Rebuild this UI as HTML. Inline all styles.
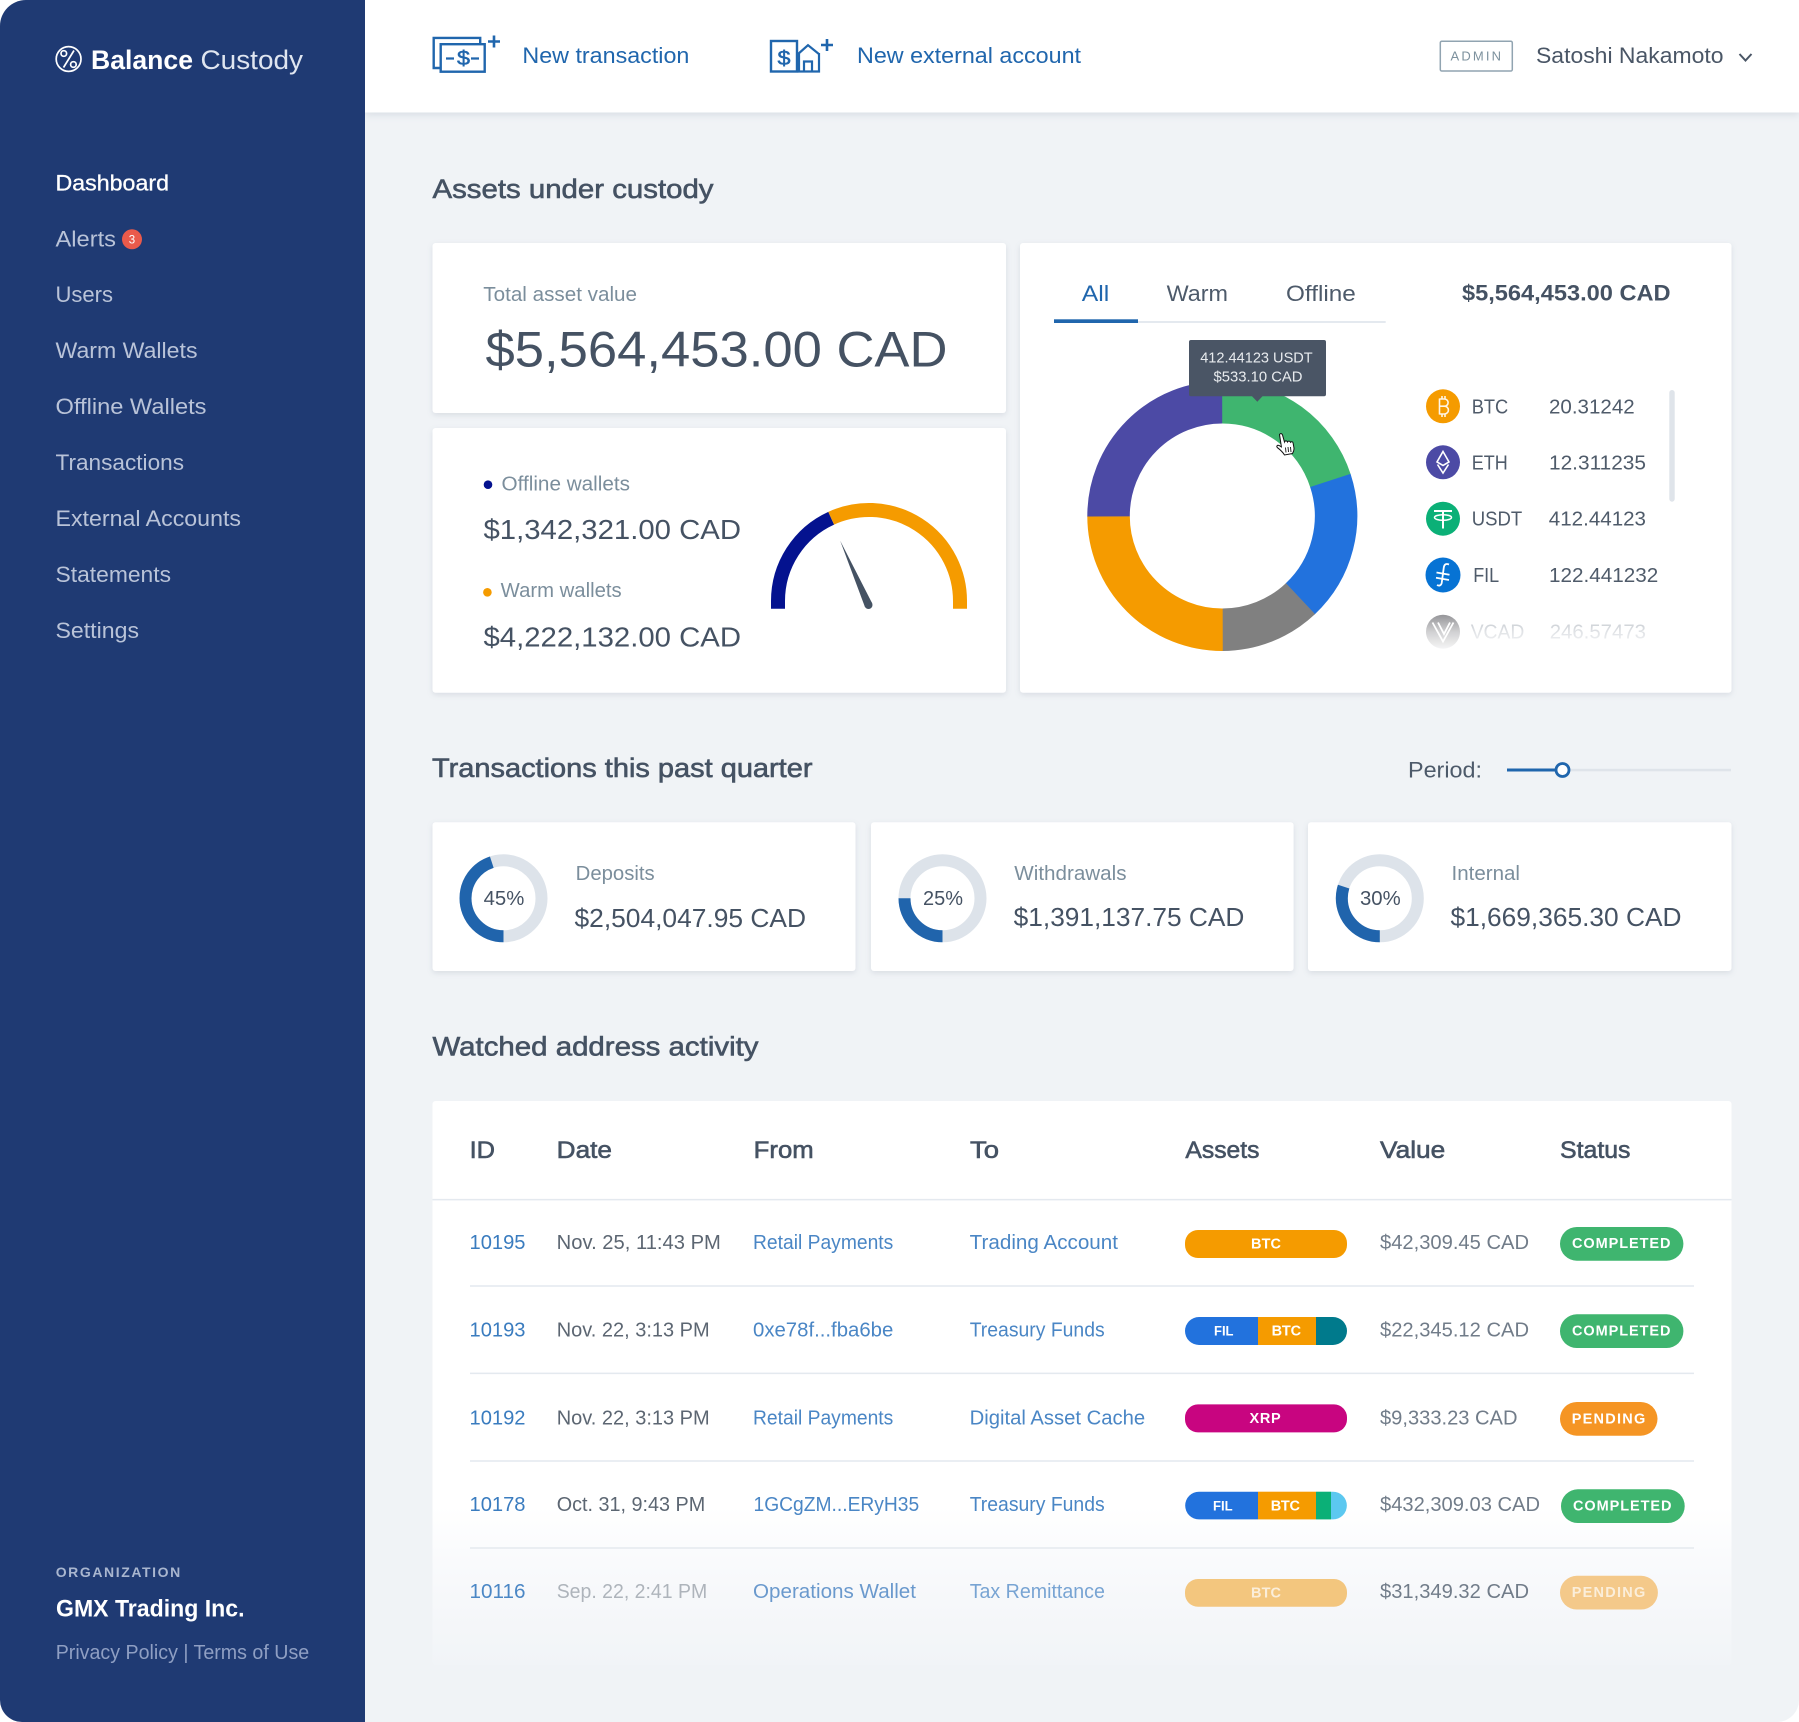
<!DOCTYPE html>
<html lang="en">
<head>
<meta charset="utf-8">
<title>Balance Custody Dashboard</title>
<style>
html,body{margin:0;padding:0;background:#fff;width:1799px;height:1722px;overflow:hidden}
svg{display:block;border-radius:26px 0 22px 22px;overflow:hidden}
text{font-family:"Liberation Sans",Arial,sans-serif;white-space:pre}
.n{font-size:22px;fill:#b9c3d8}
.h{font-size:26.5px;fill:#455263;stroke:#455263;stroke-width:.6}
.th{font-size:24px;fill:#455263;stroke:#455263;stroke-width:.6}
.lb{font-size:20px;fill:#7b8e9c}
.am{font-size:26px;fill:#455263}
.tab{font-size:22px;fill:#4d5a6a}
.c{font-size:20.5px;fill:#4f5b6a}
.id{font-size:20px;fill:#3a7cbf}
.d{font-size:20px;fill:#5c6672}
.l{font-size:20px;fill:#4a86c5}
.v{font-size:20px;fill:#717c89}
.p{font-size:14.5px;font-weight:bold;fill:#fff}
.s{font-size:14.5px;font-weight:bold;fill:#fff}
.card{fill:#fff;filter:drop-shadow(0 2px 3px rgba(60,80,110,.13))}
.ln{stroke:#e4e9ef;stroke-width:1.5}
</style>
</head>
<body>
<svg xmlns="http://www.w3.org/2000/svg" width="1799" height="1722" viewBox="0 0 1799 1722">
<defs>
<linearGradient id="tb" gradientUnits="userSpaceOnUse" x1="0" y1="1101" x2="0" y2="1665">
<stop offset="0" stop-color="#fff"/><stop offset=".72" stop-color="#fff"/><stop offset=".82" stop-color="#f9fafc"/><stop offset="1" stop-color="#f1f4f7"/>
</linearGradient>
<linearGradient id="fd" gradientUnits="userSpaceOnUse" x1="0" y1="612" x2="0" y2="652">
<stop offset="0" stop-color="#fff" stop-opacity="0"/><stop offset=".5" stop-color="#fff" stop-opacity=".6"/><stop offset="1" stop-color="#fff" stop-opacity=".98"/>
</linearGradient>
</defs>
<rect width="1799" height="1722" fill="#f0f3f6"/>

<!-- header -->
<rect x="365" y="0" width="1434" height="112.5" fill="#fff" style="filter:drop-shadow(0 2px 4px rgba(60,80,110,.14))"/>
<g fill="none" stroke="#2066ad" stroke-width="2.4">
<path d="M440 68H433.7V37.900H480.200V43.500"/>
<rect x="440.700" y="44.200" width="44" height="27.500"/>
<path d="M446 58.500h8M471 58.500h8" stroke-width="2.200"/>
<path d="M494 35.500v12M488 41.500h12" stroke-width="2.600"/>
<rect x="771" y="41" width="26" height="30.500"/>
<path d="M797.500 54.500L808 45.200L819.500 54.500M799 53V71.500H819V53M804 71.500V61.500H812V71.500" stroke-width="2.200"/>
<path d="M827 39v12M821 45h12" stroke-width="2.600"/>
</g>
<text x="457" y="65" font-size="20" fill="#2066ad" stroke="#2066ad" stroke-width=".5" textLength="13" lengthAdjust="spacingAndGlyphs">$</text>
<text x="777.500" y="65" font-size="20" fill="#2066ad" stroke="#2066ad" stroke-width=".5" textLength="13" lengthAdjust="spacingAndGlyphs">$</text>
<text x="522.400" y="63" font-size="22px" fill="#2066ad" textLength="167" lengthAdjust="spacingAndGlyphs">New transaction</text>
<text x="857" y="63" font-size="22px" fill="#2066ad" textLength="224" lengthAdjust="spacingAndGlyphs">New external account</text>
<rect x="1440.300" y="41.200" width="72" height="29.800" rx="1.500" fill="#fff" stroke="#91a4b1" stroke-width="1.500"/>
<text x="1450.500" y="60.500" font-size="13px" fill="#7d919e" textLength="50.500">ADMIN</text>
<text x="1536" y="63" font-size="22px" fill="#4a5666" textLength="187.500" lengthAdjust="spacingAndGlyphs">Satoshi Nakamoto</text>
<path d="M1739.500 54l6 6.500l6-6.500" fill="none" stroke="#4a5666" stroke-width="2"/>

<!-- sidebar -->
<rect x="0" y="0" width="365" height="1722" fill="#1f3a73"/>
<g fill="none" stroke="#fff" stroke-width="1.700">
<circle cx="68.600" cy="59" r="12.400"/>
<path d="M74 50.500L63.500 67.500" />
<circle cx="63.800" cy="53.500" r="2.800"/>
<circle cx="73.400" cy="64.500" r="2.800"/>
</g>
<text x="91" y="69" font-size="27px" font-weight="bold" fill="#fff" textLength="102" lengthAdjust="spacingAndGlyphs">Balance</text>
<text x="200.500" y="69" font-size="27px" fill="#dfe5f0" textLength="102.500" lengthAdjust="spacingAndGlyphs">Custody</text>

<text x="55.500" y="190.300" class="n" style="fill:#fff" stroke="#fff" stroke-width=".3" textLength="113.500" lengthAdjust="spacingAndGlyphs">Dashboard</text>
<text x="55.500" y="246.300" class="n" textLength="60.500" lengthAdjust="spacingAndGlyphs">Alerts</text>
<circle cx="132" cy="239.300" r="10" fill="#ea5a4b"/>
<text x="128.700" y="243.500" font-size="11.500px" fill="#fff">3</text>
<text x="55.500" y="302.200" class="n" textLength="57.500" lengthAdjust="spacingAndGlyphs">Users</text>
<text x="55.500" y="358.100" class="n" textLength="142" lengthAdjust="spacingAndGlyphs">Warm Wallets</text>
<text x="55.500" y="414" class="n" textLength="151" lengthAdjust="spacingAndGlyphs">Offline Wallets</text>
<text x="55.500" y="470" class="n" textLength="128.500" lengthAdjust="spacingAndGlyphs">Transactions</text>
<text x="55.500" y="525.900" class="n" textLength="185.500" lengthAdjust="spacingAndGlyphs">External Accounts</text>
<text x="55.500" y="581.900" class="n" textLength="115.500" lengthAdjust="spacingAndGlyphs">Statements</text>
<text x="55.500" y="637.800" class="n" textLength="83.500" lengthAdjust="spacingAndGlyphs">Settings</text>

<text x="55.700" y="1576.800" font-size="14px" font-weight="bold" fill="#a9b6cf" textLength="124.500">ORGANIZATION</text>
<text x="56" y="1616.700" font-size="24px" font-weight="bold" fill="#fff" textLength="188.500" lengthAdjust="spacingAndGlyphs">GMX Trading Inc.</text>
<text x="55.700" y="1659" font-size="20.500px" fill="#8f9fc3" textLength="253.500" lengthAdjust="spacingAndGlyphs">Privacy Policy | Terms of Use</text>

<!-- Assets under custody -->
<text x="432.500" y="198" class="h" textLength="281" lengthAdjust="spacingAndGlyphs">Assets under custody</text>

<rect class="card" x="432.500" y="243" width="573.500" height="170" rx="3"/>
<text x="483.300" y="301" class="lb" textLength="153.700" lengthAdjust="spacingAndGlyphs">Total asset value</text>
<text x="485.500" y="366.700" font-size="50px" fill="#455263" textLength="462" lengthAdjust="spacingAndGlyphs">$5,564,453.00 CAD</text>

<rect class="card" x="432.500" y="428" width="573.500" height="264.700" rx="3"/>
<circle cx="488" cy="484.700" r="4.300" fill="#04128f"/>
<text x="501.500" y="490.700" class="lb" textLength="128.500" lengthAdjust="spacingAndGlyphs">Offline wallets</text>
<text x="483.500" y="539" font-size="28px" fill="#455263" textLength="257.500" lengthAdjust="spacingAndGlyphs">$1,342,321.00 CAD</text>
<circle cx="487.400" cy="592.300" r="4.300" fill="#f59b00"/>
<text x="500.700" y="597" class="lb" textLength="121" lengthAdjust="spacingAndGlyphs">Warm wallets</text>
<text x="483.500" y="646.400" font-size="28px" fill="#455263" textLength="257.500" lengthAdjust="spacingAndGlyphs">$4,222,132.00 CAD</text>
<g fill="none" stroke-width="14">
<path d="M778 608.700V601A91 91 0 0 1 831.200 518.200" stroke="#04128f"/>
<path d="M831.200 518.200A91 91 0 0 1 960 601V608.700" stroke="#f59b00"/>
</g>
<path d="M840.200 540.700L872.200 603.400L864.800 606.600Z" fill="#455263"/>
<circle cx="868.500" cy="605" r="4" fill="#455263"/>

<!-- donut card -->
<rect class="card" x="1020" y="243" width="711.500" height="449.700" rx="3"/>
<text x="1081.800" y="301" class="tab" style="fill:#2066ad" textLength="27.500" lengthAdjust="spacingAndGlyphs">All</text>
<text x="1166.600" y="301" class="tab" textLength="61.400" lengthAdjust="spacingAndGlyphs">Warm</text>
<text x="1286" y="301" class="tab" textLength="69.800" lengthAdjust="spacingAndGlyphs">Offline</text>
<rect x="1054" y="321" width="331.700" height="2" fill="#e4e9ef"/>
<rect x="1054" y="319.300" width="84" height="3.700" fill="#2066ad"/>
<text x="1462" y="300.700" font-size="22px" font-weight="bold" fill="#455263" textLength="208.600" lengthAdjust="spacingAndGlyphs">$5,564,453.00 CAD</text>

<g fill="none" stroke-width="42.500">
<circle cx="1222.300" cy="516" r="113.750" pathLength="360" stroke="#3fb56f" stroke-dasharray="72 288" transform="rotate(-90 1222.300 516)"/>
<circle cx="1222.300" cy="516" r="113.750" pathLength="360" stroke="#2272dd" stroke-dasharray="64.800 295.200" transform="rotate(-18 1222.300 516)"/>
<circle cx="1222.300" cy="516" r="113.750" pathLength="360" stroke="#808080" stroke-dasharray="43.200 316.800" transform="rotate(46.800 1222.300 516)"/>
<circle cx="1222.300" cy="516" r="113.750" pathLength="360" stroke="#f59b00" stroke-dasharray="90 270" transform="rotate(90 1222.300 516)"/>
<circle cx="1222.300" cy="516" r="113.750" pathLength="360" stroke="#4c4aa5" stroke-dasharray="90 270" transform="rotate(180 1222.300 516)"/>
</g>
<path d="M1189 342a2 2 0 0 1 2-2H1324a2 2 0 0 1 2 2V394.300a2 2 0 0 1-2 2H1262.500L1257.300 401.700L1252 396.300H1191a2 2 0 0 1-2-2Z" fill="#4a5565"/>
<text x="1200.200" y="362.700" font-size="15px" fill="#e8ebee" textLength="112.500" lengthAdjust="spacingAndGlyphs">412.44123 USDT</text>
<text x="1213.500" y="381.700" font-size="15px" fill="#e8ebee" textLength="89" lengthAdjust="spacingAndGlyphs">$533.10 CAD</text>
<g transform="translate(-1 0)">
<path d="M1280.500 434.500c1-1.500 2.600-1 3 .5l2 7c.5-1.500 2.500-1.500 3 0c.6-1.200 2.500-1.200 3 .3c.8-1 2.400-.7 2.600.8l.9 5c.2 2-.5 3.500-1.500 5.400l-8 1.500c-1.500-2.500-4-5-7-7.300c-1.500-1.400-.2-3 1.500-2.200l2.400 1.400z" fill="#fff" stroke="#111" stroke-width="1"/>
<path d="M1286.500 447.500l.5 5M1289 447l.5 5M1291.500 447l.5 5" stroke="#111" stroke-width=".9"/>
</g>

<!-- coin list -->
<circle cx="1443" cy="406.300" r="17" fill="#f59b00"/>
<path d="M1439.500 398.500V414.500M1439.500 399H1444.500a3.600 3.600 0 0 1 0 7.200H1439.500M1444.500 406.200a3.900 3.900 0 0 1 0 7.800H1439.500M1442 396v3M1445 396v3M1442 414v3M1445 414v3" fill="none" stroke="#fff" stroke-width="1.600" opacity=".9"/>
<text x="1471.700" y="413.300" class="c" textLength="36.500" lengthAdjust="spacingAndGlyphs">BTC</text>
<text x="1549" y="413.300" class="c" textLength="85.700" lengthAdjust="spacingAndGlyphs">20.31242</text>
<circle cx="1443" cy="462.300" r="17" fill="#4c4aa5"/>
<path d="M1443 451.500L1449 462L1443 465.500L1437 462ZM1437.500 464.500L1443 473L1448.500 464.500" fill="none" stroke="#fff" stroke-width="1.600"/>
<text x="1471.700" y="469.700" class="c" textLength="36" lengthAdjust="spacingAndGlyphs">ETH</text>
<text x="1549" y="469.700" class="c" textLength="97" lengthAdjust="spacingAndGlyphs">12.311235</text>
<circle cx="1443" cy="518.700" r="17" fill="#0bb077"/>
<path d="M1434 511H1452M1443 511V528.500" fill="none" stroke="#fff" stroke-width="2"/>
<ellipse cx="1443" cy="517.500" rx="8.500" ry="2.800" fill="none" stroke="#fff" stroke-width="1.500"/>
<text x="1471.700" y="525.700" class="c" textLength="50.500" lengthAdjust="spacingAndGlyphs">USDT</text>
<text x="1548.800" y="525.700" class="c" textLength="97.200" lengthAdjust="spacingAndGlyphs">412.44123</text>
<circle cx="1443" cy="575" r="17.500" fill="#0773d4"/>
<path d="M1449 564.500c-3.500-1.500-4.800 .5-5.200 3L1441.700 583c-.5 2.500-2.500 3.200-4.700 2M1436.500 572.500L1449.500 574.800M1436 577.800L1449 580" fill="none" stroke="#fff" stroke-width="1.800"/>
<text x="1473.200" y="582" class="c" textLength="26" lengthAdjust="spacingAndGlyphs">FIL</text>
<text x="1549" y="582" class="c" textLength="109.300" lengthAdjust="spacingAndGlyphs">122.441232</text>
<circle cx="1443" cy="631.700" r="17" fill="#8c8c90"/>
<path d="M1432.500 622.500L1443 641.500L1453.500 622.500M1438 622.500L1444 634L1450 622.500" fill="none" stroke="#fff" stroke-width="1.800"/>
<text x="1470.700" y="638.300" class="c" style="fill:#b4bac2" textLength="53.600" lengthAdjust="spacingAndGlyphs">VCAD</text>
<text x="1549.700" y="638.300" class="c" style="fill:#b4bac2" textLength="96.300" lengthAdjust="spacingAndGlyphs">246.57473</text>
<rect x="1425" y="612" width="240" height="46" fill="url(#fd)"/>
<rect x="1669.300" y="390" width="5.400" height="111.700" rx="2.700" fill="#dfe4ea"/>

<!-- Transactions -->
<text x="432" y="777" class="h" textLength="380.500" lengthAdjust="spacingAndGlyphs">Transactions this past quarter</text>
<text x="1408" y="777.500" class="tab" textLength="74" lengthAdjust="spacingAndGlyphs">Period:</text>
<rect x="1507" y="768.800" width="224" height="2.500" fill="#dfe4ea"/>
<rect x="1507" y="768.500" width="50" height="3" fill="#2066ad"/>
<circle cx="1562.500" cy="770" r="6.500" fill="#fff" stroke="#2066ad" stroke-width="2.800"/>

<rect class="card" x="432.500" y="822.300" width="423" height="148.700" rx="3"/>
<rect class="card" x="871" y="822.300" width="422.600" height="148.700" rx="3"/>
<rect class="card" x="1308" y="822.300" width="423.500" height="148.700" rx="3"/>
<g fill="none" stroke-width="12">
<circle cx="503.500" cy="898.300" r="38" stroke="#dde3ea"/>
<circle cx="503.500" cy="898.300" r="38" stroke="#2064ac" pathLength="100" stroke-dasharray="45 55" transform="rotate(90 503.500 898.300)"/>
<circle cx="942.500" cy="898.300" r="38" stroke="#dde3ea"/>
<circle cx="942.500" cy="898.300" r="38" stroke="#2064ac" pathLength="100" stroke-dasharray="25 75" transform="rotate(90 942.500 898.300)"/>
<circle cx="1379.800" cy="898.300" r="38" stroke="#dde3ea"/>
<circle cx="1379.800" cy="898.300" r="38" stroke="#2064ac" pathLength="100" stroke-dasharray="30 70" transform="rotate(90 1379.800 898.300)"/>
</g>
<text x="483.600" y="905" font-size="20px" fill="#455263" textLength="40.700" lengthAdjust="spacingAndGlyphs">45%</text>
<text x="923" y="905" font-size="20px" fill="#455263" textLength="40" lengthAdjust="spacingAndGlyphs">25%</text>
<text x="1360" y="905" font-size="20px" fill="#455263" textLength="40.700" lengthAdjust="spacingAndGlyphs">30%</text>
<text x="575.700" y="880" class="lb" textLength="79" lengthAdjust="spacingAndGlyphs">Deposits</text>
<text x="1014.300" y="880" class="lb" textLength="112.200" lengthAdjust="spacingAndGlyphs">Withdrawals</text>
<text x="1451.500" y="880" class="lb" textLength="68.500" lengthAdjust="spacingAndGlyphs">Internal</text>
<text x="574.500" y="927" class="am" textLength="231.500" lengthAdjust="spacingAndGlyphs">$2,504,047.95 CAD</text>
<text x="1013.700" y="926" class="am" textLength="230.700" lengthAdjust="spacingAndGlyphs">$1,391,137.75 CAD</text>
<text x="1450.500" y="926" class="am" textLength="231" lengthAdjust="spacingAndGlyphs">$1,669,365.30 CAD</text>

<!-- Watched -->
<text x="432.500" y="1055.500" class="h" textLength="326" lengthAdjust="spacingAndGlyphs">Watched address activity</text>
<rect x="432.500" y="1101" width="1299" height="564" rx="3" fill="url(#tb)"/>
<text x="469.600" y="1158.200" class="th" textLength="25.400" lengthAdjust="spacingAndGlyphs">ID</text>
<text x="556.700" y="1158.200" class="th" textLength="55.300" lengthAdjust="spacingAndGlyphs">Date</text>
<text x="753.700" y="1158.200" class="th" textLength="60" lengthAdjust="spacingAndGlyphs">From</text>
<text x="970" y="1158.200" class="th" textLength="29" lengthAdjust="spacingAndGlyphs">To</text>
<text x="1185.400" y="1158.200" class="th" textLength="74.100" lengthAdjust="spacingAndGlyphs">Assets</text>
<text x="1380" y="1158.200" class="th" textLength="65.300" lengthAdjust="spacingAndGlyphs">Value</text>
<text x="1560" y="1158.200" class="th" textLength="70.500" lengthAdjust="spacingAndGlyphs">Status</text>
<path class="ln" d="M432.500 1199.600H1731.500M470 1286H1694M470 1373.400H1694M470 1461H1694M470 1548H1694" fill="none"/>

<!-- row 1 -->
<text x="469.500" y="1249.200" class="id" textLength="56" lengthAdjust="spacingAndGlyphs">10195</text>
<text x="556.700" y="1249.200" class="d" textLength="164.200" lengthAdjust="spacingAndGlyphs">Nov. 25, 11:43 PM</text>
<text x="753" y="1249.200" class="l" textLength="140.300" lengthAdjust="spacingAndGlyphs">Retail Payments</text>
<text x="969.700" y="1249.200" class="l" textLength="148.300" lengthAdjust="spacingAndGlyphs">Trading Account</text>
<rect x="1185" y="1230" width="162" height="28" rx="13" fill="#f59b00"/>
<text x="1251" y="1248.400" class="p" textLength="30">BTC</text>
<text x="1380" y="1249.200" class="v" textLength="149" lengthAdjust="spacingAndGlyphs">$42,309.45 CAD</text>
<rect x="1560" y="1227" width="123.400" height="33.700" rx="16.800" fill="#3fb56f"/>
<text x="1572" y="1248.200" class="s" textLength="98.500">COMPLETED</text>

<!-- row 2 -->
<text x="469.500" y="1336.500" class="id" textLength="56" lengthAdjust="spacingAndGlyphs">10193</text>
<text x="556.700" y="1336.500" class="d" textLength="153" lengthAdjust="spacingAndGlyphs">Nov. 22, 3:13 PM</text>
<text x="753" y="1336.500" class="l" textLength="140.300" lengthAdjust="spacingAndGlyphs">0xe78f...fba6be</text>
<text x="969.700" y="1336.500" class="l" textLength="135" lengthAdjust="spacingAndGlyphs">Treasury Funds</text>
<path d="M1199 1317H1258V1345H1199a14 14 0 0 1 0-28Z" fill="#2272dd"/>
<rect x="1258" y="1317" width="58" height="28" fill="#f59b00"/>
<path d="M1316 1317H1333a14 14 0 0 1 0 28H1316Z" fill="#007a8c"/>
<text x="1214" y="1335.400" font-size="14px" font-weight="bold" fill="#fff" textLength="19.500" lengthAdjust="spacingAndGlyphs">FIL</text>
<text x="1271.600" y="1335.400" class="p" textLength="29.500">BTC</text>
<text x="1380" y="1336.500" class="v" textLength="149" lengthAdjust="spacingAndGlyphs">$22,345.12 CAD</text>
<rect x="1560" y="1314.300" width="123.400" height="33.700" rx="16.800" fill="#3fb56f"/>
<text x="1572" y="1335.500" class="s" textLength="98.500">COMPLETED</text>

<!-- row 3 -->
<text x="469.500" y="1424.400" class="id" textLength="56" lengthAdjust="spacingAndGlyphs">10192</text>
<text x="556.700" y="1424.400" class="d" textLength="153" lengthAdjust="spacingAndGlyphs">Nov. 22, 3:13 PM</text>
<text x="753" y="1424.400" class="l" textLength="140.300" lengthAdjust="spacingAndGlyphs">Retail Payments</text>
<text x="969.700" y="1424.400" class="l" textLength="175.500" lengthAdjust="spacingAndGlyphs">Digital Asset Cache</text>
<rect x="1185" y="1404.400" width="162" height="28" rx="13" fill="#c80580"/>
<text x="1249.500" y="1423" class="p" textLength="31.200">XRP</text>
<text x="1380" y="1424.400" class="v" textLength="137.500" lengthAdjust="spacingAndGlyphs">$9,333.23 CAD</text>
<rect x="1560" y="1402" width="97.500" height="33.700" rx="16.800" fill="#f59524"/>
<text x="1571.700" y="1423.500" class="s" textLength="73.600">PENDING</text>

<!-- row 4 -->
<text x="469.500" y="1511.200" class="id" textLength="56" lengthAdjust="spacingAndGlyphs">10178</text>
<text x="556.700" y="1511.200" class="d" textLength="148.500" lengthAdjust="spacingAndGlyphs">Oct. 31, 9:43 PM</text>
<text x="753.500" y="1511.200" class="l" textLength="165.700" lengthAdjust="spacingAndGlyphs">1GCgZM...ERyH35</text>
<text x="969.700" y="1511.200" class="l" textLength="135" lengthAdjust="spacingAndGlyphs">Treasury Funds</text>
<path d="M1199 1491.700H1258V1519.400H1199a13.850 13.850 0 0 1 0-27.700Z" fill="#2272dd"/>
<rect x="1258" y="1491.700" width="58" height="27.700" fill="#f59b00"/>
<rect x="1316" y="1491.700" width="15" height="27.700" fill="#0bb077"/>
<path d="M1331 1491.700H1333a13.850 13.850 0 0 1 0 27.700H1331Z" fill="#5cc8f0"/>
<text x="1213" y="1510.400" font-size="14px" font-weight="bold" fill="#fff" textLength="19.600" lengthAdjust="spacingAndGlyphs">FIL</text>
<text x="1270.700" y="1510.400" class="p" textLength="29.300">BTC</text>
<text x="1380" y="1511.200" class="v" textLength="160" lengthAdjust="spacingAndGlyphs">$432,309.03 CAD</text>
<rect x="1561" y="1489.300" width="123.700" height="33.700" rx="16.800" fill="#3fb56f"/>
<text x="1573" y="1510.500" class="s" textLength="98.500">COMPLETED</text>

<!-- row 5 -->
<text x="469.500" y="1598.200" class="id" style="fill:#4b87c5" textLength="56" lengthAdjust="spacingAndGlyphs">10116</text>
<text x="556.700" y="1598.200" class="d" style="fill:#aeb4bb" textLength="150.500" lengthAdjust="spacingAndGlyphs">Sep. 22, 2:41 PM</text>
<text x="753" y="1598.200" class="l" style="fill:#6a99cd" textLength="163" lengthAdjust="spacingAndGlyphs">Operations Wallet</text>
<text x="969.700" y="1598.200" class="l" style="fill:#78a4d3" textLength="135.200" lengthAdjust="spacingAndGlyphs">Tax Remittance</text>
<rect x="1185" y="1579" width="162" height="27.800" rx="13" fill="#f3c67e"/>
<text x="1251" y="1597.400" class="p" style="fill:#fbeeda" textLength="30">BTC</text>
<text x="1380" y="1598.200" class="v" textLength="149" lengthAdjust="spacingAndGlyphs">$31,349.32 CAD</text>
<rect x="1560" y="1575.800" width="97.900" height="33.700" rx="16.800" fill="#f4c98a"/>
<text x="1571.700" y="1597.200" class="s" style="fill:#fbeeda" textLength="73.600">PENDING</text>
</svg>
</body>
</html>
